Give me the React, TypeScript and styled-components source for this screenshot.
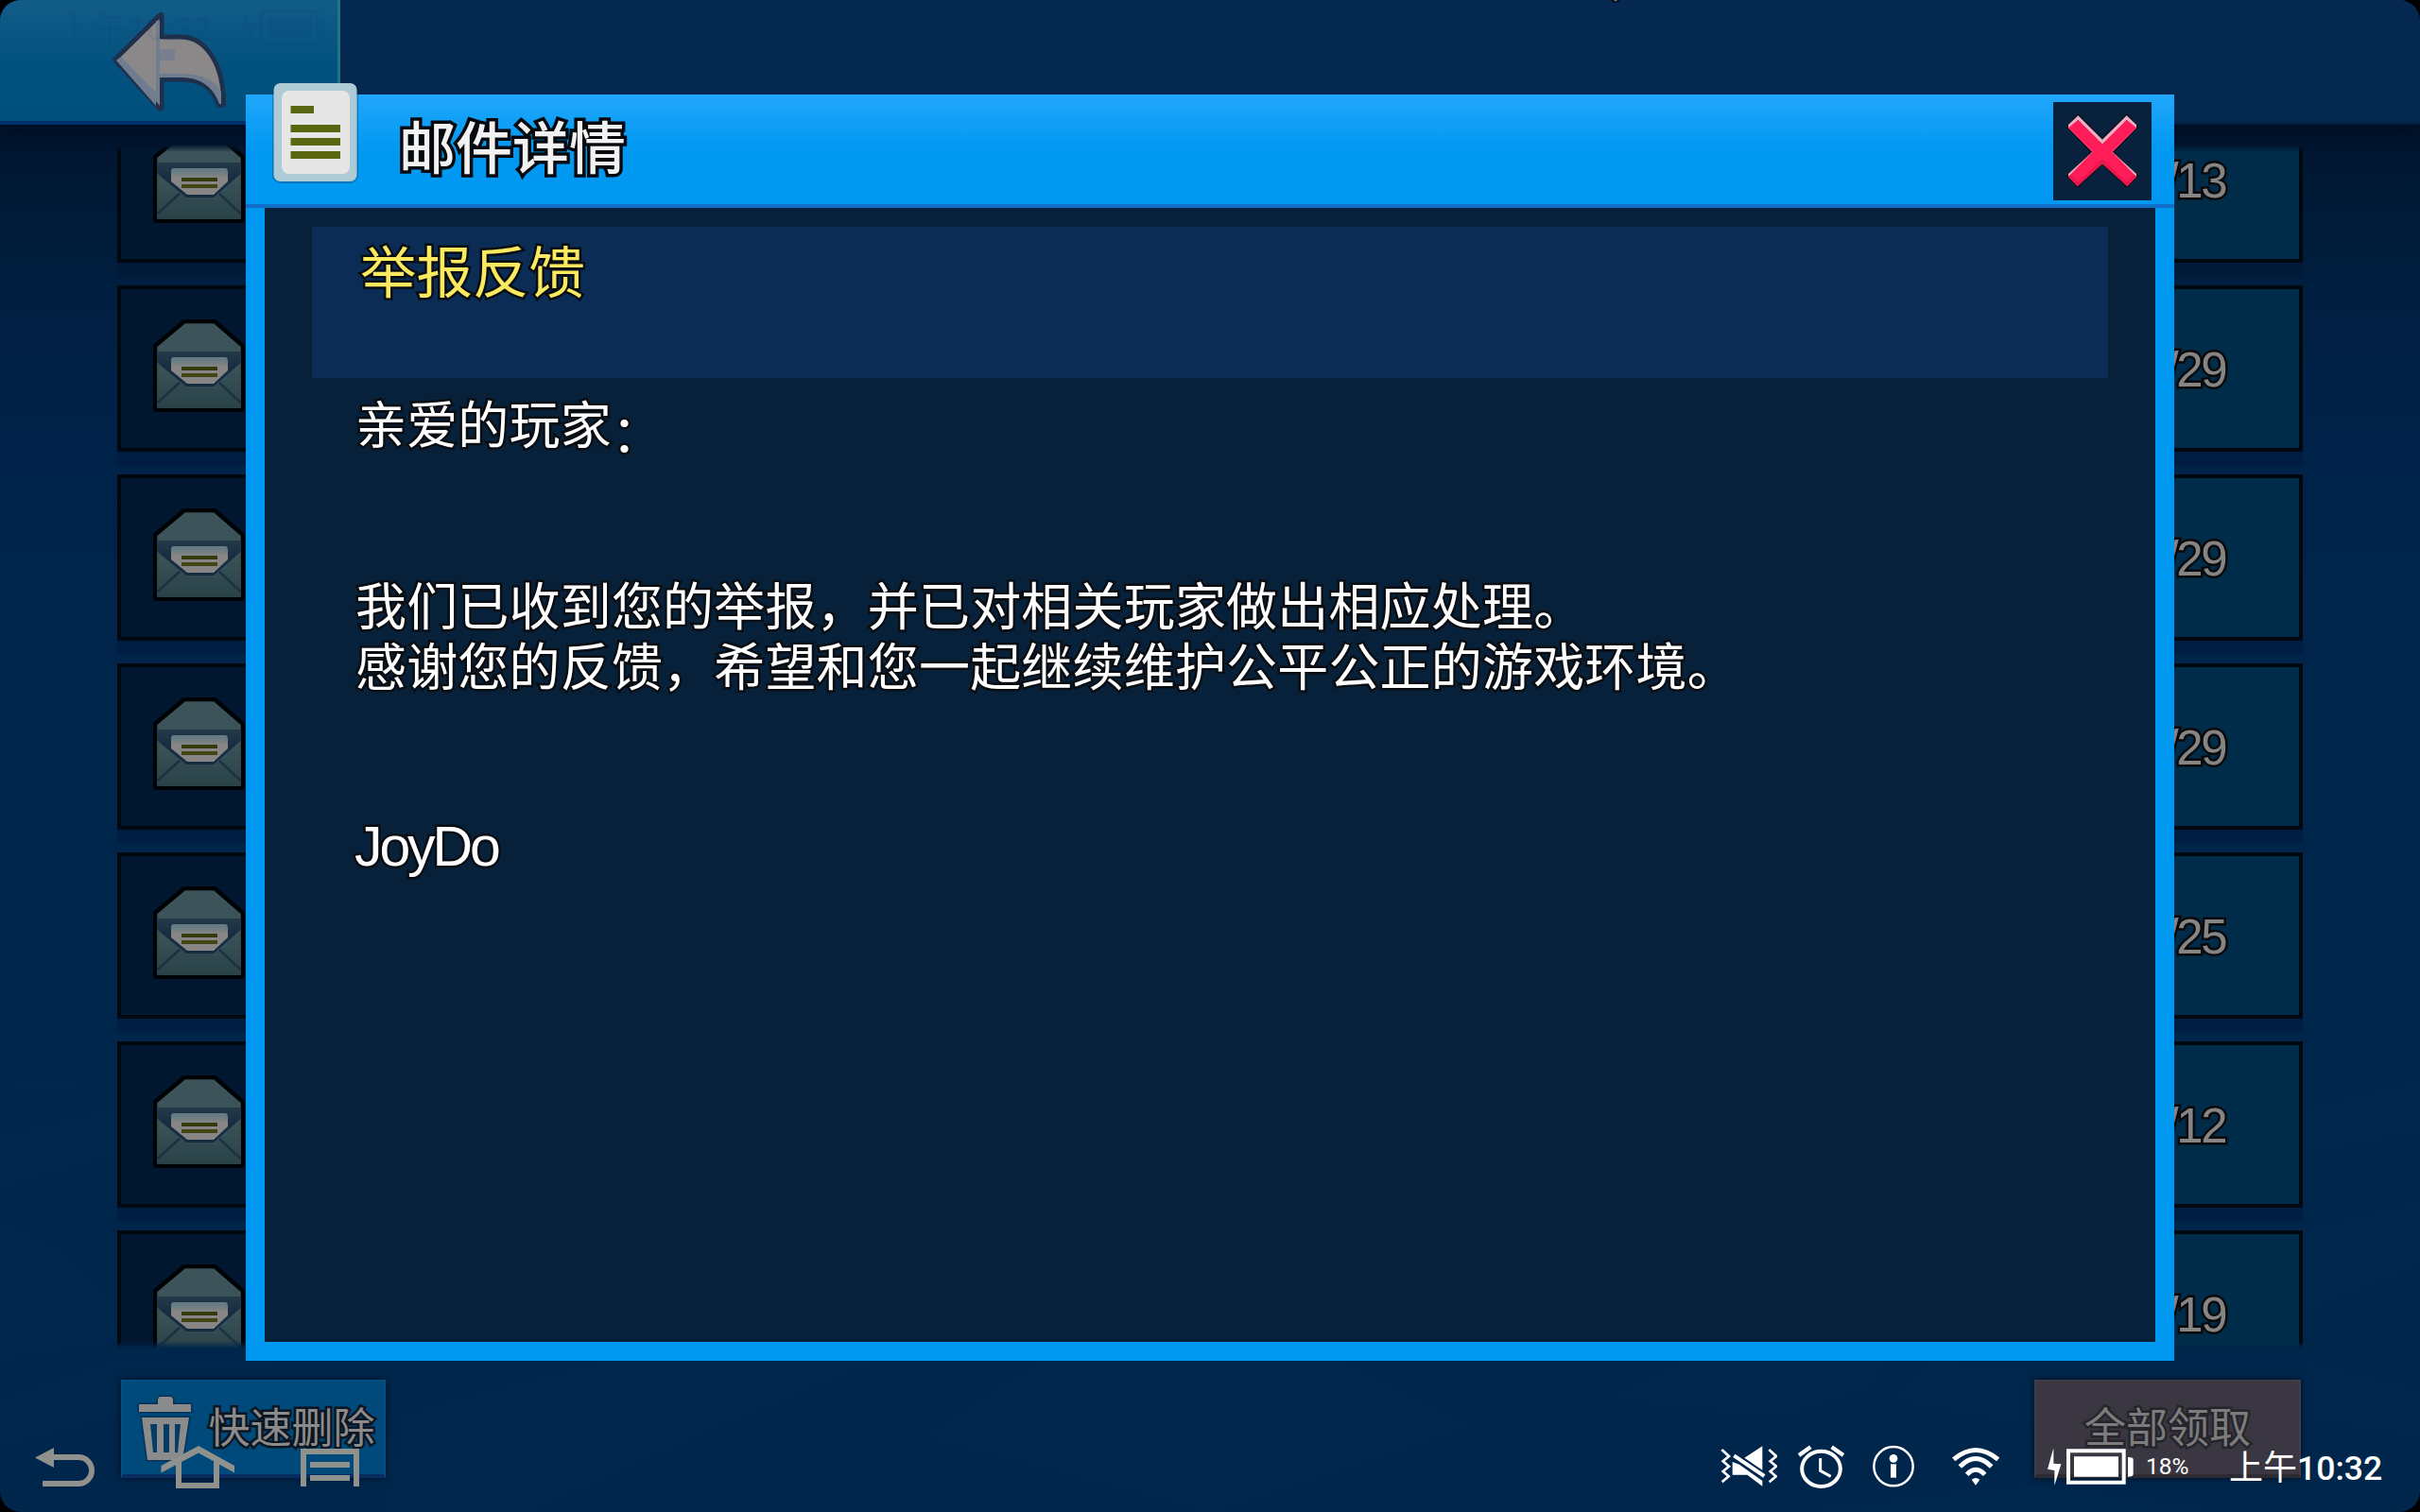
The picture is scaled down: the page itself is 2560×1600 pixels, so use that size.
import React from "react";
import styled, { createGlobalStyle } from "styled-components";

const Global = createGlobalStyle`
  html, body { margin: 0; padding: 0; background: #000; }
  * { box-sizing: border-box; }
  svg { display: block; flex: none; }
`;

const gameFont = `"Liberation Sans", "Noto Sans CJK SC", sans-serif`;

const Screen = styled.div`
  position: relative;
  width: 2560px;
  height: 1600px;
  overflow: hidden;
  border-radius: 22px;
  font-family: ${gameFont};
  background: linear-gradient(#00142e 130px, #001b38 220px, #001f42 330px, #00234a 500px, #00254b 800px, #00264c 1600px);
`;

const Floor = styled.svg`
  position: absolute;
  left: 0;
  top: 1000px;
`;

const Page = styled.div`
  position: relative;
  display: flex;
  flex-direction: column;
  height: 100%;
`;

/* ---------- top bar ---------- */

const TopBar = styled.header`
  display: flex;
  flex: none;
  height: 132px;
  background: linear-gradient(#052850 0 128px, #031c3e 132px);
  box-shadow: 0 4px 26px 4px rgba(0, 8, 24, 0.6);
`;

const BackButton = styled.button`
  display: flex;
  align-items: flex-start;
  width: 360px;
  height: 132px;
  padding: 10px 0 0 117px;
  border: 0;
  border-right: 3px solid #227383;
  border-bottom: 4px solid #00306c;
  background: linear-gradient(#125c88, #02517e 70px, #00507d);
`;

const Speck = styled.svg`
  margin-left: 1344px;
`;

const Residue = styled.div`
  position: absolute;
  left: 62px;
  top: 4px;
  display: flex;
  align-items: center;
  height: 50px;
  color: #0d2c66;
  opacity: 0.06;
`;

/* ---------- mail list ---------- */

const MailList = styled.ul`
  flex: none;
  display: flex;
  flex-direction: column;
  gap: 24px;
  list-style: none;
  width: 2312px;
  height: 1274px;
  margin: 21px 0 0 124px;
  padding: 0;
  overflow: hidden;
  mask-image: linear-gradient(transparent, #000 8px, #000 1266px, transparent);
`;

const MailRow = styled.li`
  flex: none;
  display: flex;
  height: 176px;
  border: 4px solid #02080f;
  box-shadow: 0 15px 2px rgba(0, 16, 48, 0.3);
  background: #002c4a;

  &:first-child { margin-top: -51px; }
`;

const MailThumb = styled.div`
  width: 168px;
  padding: 32px 0 0 34px;
  background: #00172f;
`;

const MailDate = styled.time`
  flex: 1;
  padding-right: 78px;
  text-align: right;
  font-size: 51px;
  letter-spacing: -2.5px;
  line-height: 171px;
  color: #858585;
  -webkit-text-stroke: 5px #0a0a0c;
  paint-order: stroke fill;
`;

/* ---------- footer ---------- */

const Footer = styled.footer`
  display: flex;
  justify-content: space-between;
  padding: 33px 126px 0 128px;
`;

const FooterButton = styled.button<{ $muted?: boolean }>`
  display: flex;
  align-items: center;
  justify-content: center;
  width: ${(p) => (p.$muted ? 282 : 280)}px;
  height: 104px;
  padding: 2px 0 0 ${(p) => (p.$muted ? 0 : 4)}px;
  border: 2px solid ${(p) => (p.$muted ? "#403d47" : "#005080")};
  border-bottom: 4px solid ${(p) => (p.$muted ? "#2c2a33" : "#0b2c63")};
  background: ${(p) => (p.$muted ? "#3a3742" : "#00497b")};
  box-shadow: 0 0 8px rgba(0, 0, 0, 0.55);
  font-family: ${gameFont};
  font-size: 44px;
  line-height: 96px;
  color: ${(p) => (p.$muted ? "#7c7c7c" : "#8b8b8b")};
  -webkit-text-stroke: 5px ${(p) => (p.$muted ? "#26252b" : "#0b1622")};
  paint-order: stroke fill;
`;

const Bin = styled.svg`
  margin-right: 15px;
`;

/* ---------- dialog ---------- */

const DialogLayer = styled.div`
  position: absolute;
  inset: 0;
  padding: 100px 260px 160px;
`;

const Dialog = styled.section`
  display: flex;
  flex-direction: column;
  height: 1340px;
`;

const DialogHeader = styled.div`
  display: flex;
  flex: none;
  height: 120px;
  padding: 0 24px 0 23px;
  border-bottom: 4px solid #116fca;
  background: linear-gradient(#21a7fc, #0098f1 52%);
`;

const DocBadge = styled.svg`
  margin-top: -18px;
`;

const DialogTitle = styled.h1`
  flex: 1;
  margin: 1px 0 0 39px;
  font-size: 60px;
  font-weight: 500;
  line-height: 116px;
  color: #f2f2f2;
  -webkit-text-stroke: 7px #05080c;
  paint-order: stroke fill;
`;

const CloseButton = styled.button`
  width: 104px;
  height: 104px;
  margin-top: 8px;
  padding: 0;
  border: 0;
  background: #08213c;
`;

const DialogBody = styled.div`
  flex: 1;
  padding: 20px 50px;
  border: solid #0097f0;
  border-width: 0 20px 20px;
  background: #08213b;
`;

const Subject = styled.h2`
  height: 160px;
  margin: 0;
  padding: 3px 0 0 51px;
  background: #0b2d55;
  font-size: 59.5px;
  font-weight: 400;
  line-height: 94px;
  color: #fbea60;
  -webkit-text-stroke: 5px #0a0d12;
  paint-order: stroke fill;
`;

const Message = styled.div`
  padding: 19px 0 0 46px;
  font-size: 54px;
  letter-spacing: 0.18px;
  line-height: 64px;
  color: #fff;
  -webkit-text-stroke: 5px #0a0d12;
  paint-order: stroke fill;
`;

const Paragraph = styled.p`
  margin: 0 0 128px;
  white-space: pre-line;
  
  &:first-child { margin-bottom: 128px; }
`;

const Colon = styled.span`
  vertical-align: -9px;
  line-height: 0;
`;

const Signature = styled.p`
  margin: -3px 0 0 -1px;
  font-size: 59px;
  letter-spacing: -3.1px;
`;

/* ---------- system bar ---------- */

const SystemBar = styled.nav`
  position: absolute;
  left: 0;
  right: 0;
  bottom: 23px;
  display: flex;
  align-items: center;
  height: 50px;
  padding-left: 34px;
  color: #fff;
`;

const NavKeys = styled.div`
  display: flex;
  width: 1786px;
  gap: 66px;
  color: #8f918c;
`;

const Slot = styled.span<{ $gap: number }>`
  margin-left: ${(p) => p.$gap}px;
`;

const Percent = styled.span`
  width: 88px;
  margin-left: 12px;
  font: 400 24.5px/50px Roboto, sans-serif;
`;

const Clock = styled.span`
  font: 500 35.6px/50px Roboto, "Noto Sans CJK SC", sans-serif;
  white-space: nowrap;

  small {
    font-size: 36px;
    font-weight: 400;
    font-family: "Noto Sans CJK SC", sans-serif;
  }
`;

/* ---------- drawings ---------- */

const BackArrow = () => (
  <svg width="124" height="110" viewBox="118 10 124 110">
    <path d="M122.500 63L170 16Q172 14 172 17V39H192C218 39 238 67 237.500 111H232C227 93 213 84 192 84H172V113Q172 117 169 114Z" fill="#8a8888" stroke="#1f304c" strokeWidth="5" strokeLinejoin="round" />
    <path d="M124 64L129 60L166 98V112Z" fill="#707c8f" />
    <path d="M166 22H170V112L166 106Z" fill="#707c8f" />
    <path d="M170 78H192C212 78 229 84 235 98V110H233C227 92 213 82 192 82H170Z" fill="#707c8f" />
    <path d="M170 52H186V64H170Z" fill="#787f8e" />
  </svg>
);

const Envelope = () => (
  <svg width="97" height="98" viewBox="0 0 97 98">
    <defs>
      <linearGradient id="paper" x2="0" y2="1">
        <stop offset="0" stopColor="#3c5559" />
        <stop offset="1" stopColor="#284248" />
      </linearGradient>
      <linearGradient id="inner" x2="0" y2="1">
        <stop offset="0" stopColor="#243a48" />
        <stop offset="0.5" stopColor="#172b41" />
      </linearGradient>
      <linearGradient id="sheet" x2="0" y2="1">
        <stop offset="0.1" stopColor="#657c82" />
        <stop offset="0.35" stopColor="#878585" />
      </linearGradient>
    </defs>
    <path d="M33 2H65L95 28V93Q95 96 92 96H5Q2 96 2 93V28Z" fill="#3b5359" stroke="#000306" strokeWidth="4.500" />
    <path d="M4.500 45H92.500V93.500H4.500Z" fill="url(#paper)" />
    <path d="M4.500 34H92.500V46L64 71H35L4.500 46Z" fill="url(#inner)" />
    <path d="M28 67L4.500 88M70 67L92.500 88" stroke="#1c3240" strokeWidth="2.500" />
    <path d="M22 40H76Q79 40 79 44V54L64 68H36L19 54V43Q19 40 22 40Z" fill="url(#sheet)" />
    <path d="M30 50H68V54H30Z" fill="#343b0a" />
    <path d="M30 57H68V61H30Z" fill="#414616" />
  </svg>
);

const DocIcon = () => (
  <DocBadge width="100" height="116" viewBox="283 82 100 116">
    <rect x="288" y="88" width="91" height="106" rx="9" fill="#00335e" opacity="0.35" />
    <rect x="289.500" y="88" width="88" height="104" rx="7" fill="#aecbd5" />
    <rect x="298" y="96" width="72" height="88" rx="8" fill="#e6e6e6" />
    <path d="M307.500 112H332V120H307.500ZM307.500 132H360V140H307.500ZM307.500 146H360V154H307.500ZM307.500 160H360V168H307.500Z" fill="#5b6611" />
  </DocBadge>
);

const CloseIcon = () => (
  <svg width="104" height="104" viewBox="0 0 312 312">
    <g strokeLinejoin="round">
      <path d="M46 78L78 41L156 117L234 41L266 78L190 160L266 236L234 268L156 196L78 268L46 236L122 160Z" fill="#1b0d1d" stroke="#160d1c" strokeWidth="7" />
      <path d="M48 72L79 43L156 119L233 43L264 72V82L188 158L264 228V236L235 266L156 195L77 266L48 236V228L124 158L48 82Z" fill="#e5b3c4" />
      <path d="M48 82L79 56L156 133L233 56L264 82L187 158L264 237L235 267L156 196L77 267L48 237L125 158Z" fill="#ff1c58" />
      <path d="M48 237L54 230L78 254L156 182L234 254L258 230L264 237L235 267L156 196L77 267Z" fill="#e00f45" opacity="0.55" />
    </g>
  </svg>
);

const TrashIcon = () => (
  <Bin width="62" height="76" viewBox="146 1474 62 76">
    <path d="M169 1486V1480L171 1478H183L185 1480V1486H204V1494H149V1486ZM152 1500H202L195 1545H158Z" fill="#8b8b8b" stroke="#063257" strokeWidth="3" paintOrder="stroke" />
    <path d="M161 1507H168V1537H164ZM175 1507H181V1537H175ZM187 1507H193L190 1537H187Z" fill="#053c66" />
  </Bin>
);

const Mute = () => (
  <svg width="60" height="50" viewBox="62 80 180 150" fill="currentColor">
    <path d="M66 101L89 122L70 138L89 154L70 170L88 186L67 204M216 101L239 122L220 138L239 154L220 170L238 186L217 204" fill="none" stroke="currentColor" strokeWidth="8" />
    <path d="M138 127L195 90V166ZM100 140L122 148L195 200V217L147 181H100Z" />
    <path d="M105 120L201 185" stroke="currentColor" strokeWidth="12" />
  </svg>
);

const Alarm = () => (
  <svg width="49" height="50" viewBox="309 80 147 150" fill="none" stroke="currentColor">
    <ellipse cx="382.500" cy="162" rx="61" ry="56" strokeWidth="12" />
    <path d="M380 128V168L413 186" strokeWidth="9" />
    <path d="M312 119L349 93M416 93L453 119" strokeWidth="13" />
  </svg>
);

const Info = () => (
  <svg width="46" height="50" viewBox="543 80 138 150" fill="currentColor">
    <circle cx="612" cy="154" r="62" fill="none" stroke="currentColor" strokeWidth="7.500" />
    <circle cx="612" cy="129" r="13" />
    <path d="M603 147H621V190H603Z" />
  </svg>
);

const Wifi = () => (
  <svg width="51" height="50" viewBox="798 80 153 150" fill="none" stroke="currentColor" strokeWidth="15">
    <path d="M803 132Q873 73 944 132M823 155Q873 104 923 155M845 180Q873 149 902 180" />
    <path d="M860 196Q873 186 886 196L873 214Z" fill="currentColor" stroke="none" />
  </svg>
);

const Bolt = () => (
  <svg width="16" height="50" viewBox="48 80 48 150" fill="currentColor">
    <path d="M70 96V145L94 147L73 215V167L51 163Z" />
  </svg>
);

const Battery = () => (
  <svg width="73" height="50" viewBox="108 80 219 150" fill="currentColor">
    <path d="M117 105H293V205H117Z" fill="none" stroke="currentColor" strokeWidth="12" />
    <path d="M135 123H276V187H135ZM306 125Q323 125 323 132V180Q323 187 306 187Z" />
  </svg>
);

const BackKey = () => (
  <svg width="70" height="50" viewBox="34 1527 70 50" fill="none" stroke="currentColor" strokeWidth="6">
    <path d="M56 1542H83a14 14 0 0 1 0 28H45" />
    <path d="M37 1542.500L57 1532V1553Z" fill="currentColor" stroke="none" />
  </svg>
);

const HomeKey = () => (
  <svg width="80" height="50" viewBox="170 1527 80 50" fill="currentColor">
    <path d="M210 1530L248 1551V1558.500L210 1537.500L170.500 1558.500V1551Z" />
    <path d="M189 1546V1572H229V1546" fill="none" stroke="currentColor" strokeWidth="6" />
  </svg>
);

const MenuKey = () => (
  <svg width="66" height="50" viewBox="316 1527 66 50" fill="currentColor">
    <path d="M321 1573V1536H377V1573" fill="none" stroke="currentColor" strokeWidth="6" />
    <path d="M328 1547H370V1553H328ZM328 1561H370V1567H328Z" />
  </svg>
);

const dates = ["/13", "/29", "/29", "/29", "/25", "/12", "/19"];

const message = `我们已收到您的举报，并已对相关玩家做出相应处理。
感谢您的反馈，希望和您一起继续维护公平公正的游戏环境。`;

export default function App() {
  return (
    <>
      <Global />
      <Screen>
        <Floor width="2560" height="600" viewBox="0 1000 2560 600">
          <g fill="#0c3c68" opacity="0.06">
            <path d="M0 1030L110 1050L0 1072ZM0 1110L124 1090V1140L60 1160L0 1150ZM0 1200L120 1170V1225L0 1260ZM0 1290L70 1325L124 1380V1420L0 1440Z" />
            <path d="M124 1440L260 1440L410 1455L330 1480L127 1500L0 1530V1480ZM410 1500L640 1440H930L760 1510L560 1600H408Z" />
            <path d="M1100 1440H1420L1560 1510L1280 1600L980 1520ZM1780 1440H1990L1985 1466L1880 1500L1700 1480ZM2040 1440L2152 1450V1510L2000 1480Z" />
            <path d="M2436 1060L2560 1040V1080L2436 1100ZM2436 1170L2560 1140V1200L2436 1225ZM2436 1300L2560 1270V1340L2436 1390ZM2436 1440L2560 1470V1520L2436 1500ZM1900 1600L2150 1570L2360 1600Z" />
          </g>
        </Floor>
        <Page>
          <TopBar>
            <BackButton aria-label="返回"><BackArrow /></BackButton>
            <Speck width="10" height="4" viewBox="0 0 10 4">
              <path d="M0 0H10L6 3H3Z" fill="#040c18" />
              <path d="M3 0H7L5 1.500Z" fill="#8a8a8a" />
            </Speck>
            <Residue>
              <Clock><small>上午</small>10:32</Clock>
              <Slot $gap={30}><Bolt /></Slot>
              <Slot $gap={4}><Battery /></Slot>
              <Percent>18%</Percent>
              <Wifi />
              <Slot $gap={22}><Mute /></Slot>
              <Slot $gap={22}><Alarm /></Slot>
              <Slot $gap={30}><Info /></Slot>
            </Residue>
          </TopBar>
          <MailList>
            {dates.map((d, i) => (
              <MailRow key={i}>
                <MailThumb><Envelope /></MailThumb>
                <MailDate>{d}</MailDate>
              </MailRow>
            ))}
          </MailList>
          <Footer>
            <FooterButton><TrashIcon />快速删除</FooterButton>
            <FooterButton $muted>全部领取</FooterButton>
          </Footer>
        </Page>
        <DialogLayer>
          <Dialog>
            <DialogHeader>
              <DocIcon />
              <DialogTitle>邮件详情</DialogTitle>
              <CloseButton aria-label="关闭"><CloseIcon /></CloseButton>
            </DialogHeader>
            <DialogBody>
              <Subject>举报反馈</Subject>
              <Message>
                <Paragraph>亲爱的玩家<Colon>：</Colon></Paragraph>
                <Paragraph>{message}</Paragraph>
                <Signature>JoyDo</Signature>
              </Message>
            </DialogBody>
          </Dialog>
        </DialogLayer>
        <SystemBar>
          <NavKeys><BackKey /><HomeKey /><MenuKey /></NavKeys>
          <Mute />
          <Slot $gap={22}><Alarm /></Slot>
          <Slot $gap={29}><Info /></Slot>
          <Slot $gap={39}><Wifi /></Slot>
          <Slot $gap={49}><Bolt /></Slot>
          <Slot $gap={4}><Battery /></Slot>
          <Percent>18%</Percent>
          <Clock><small>上午</small>10:32</Clock>
        </SystemBar>
      </Screen>
    </>
  );
}
